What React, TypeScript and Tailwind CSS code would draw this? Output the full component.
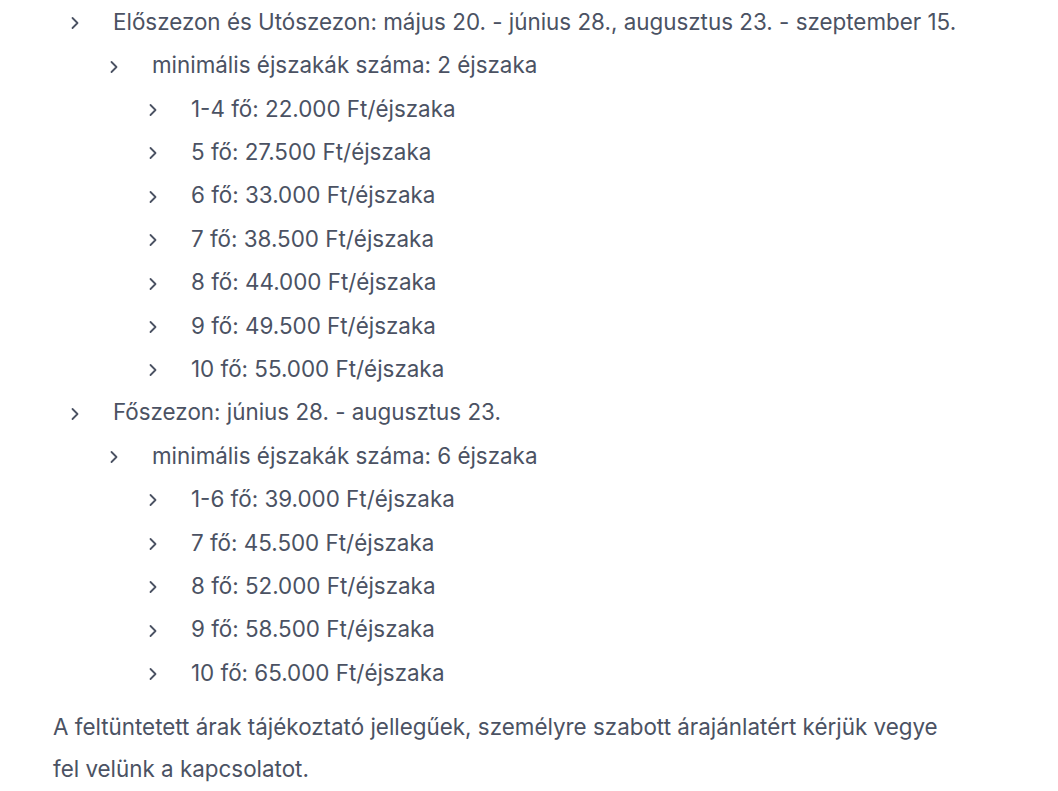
type Item = { text: string; children?: Item[] };

const seasons: Item[] = [
  {
    text: 'Előszezon és Utószezon: május 20. - június 28., augusztus 23. - szeptember 15.',
    children: [
      {
        text: 'minimális éjszakák száma: 2 éjszaka',
        children: [
          { text: '1-4 fő: 22.000 Ft/éjszaka' },
          { text: '5 fő: 27.500 Ft/éjszaka' },
          { text: '6 fő: 33.000 Ft/éjszaka' },
          { text: '7 fő: 38.500 Ft/éjszaka' },
          { text: '8 fő: 44.000 Ft/éjszaka' },
          { text: '9 fő: 49.500 Ft/éjszaka' },
          { text: '10 fő: 55.000 Ft/éjszaka' },
        ],
      },
    ],
  },
  {
    text: 'Főszezon: június 28. - augusztus 23.',
    children: [
      {
        text: 'minimális éjszakák száma: 6 éjszaka',
        children: [
          { text: '1-6 fő: 39.000 Ft/éjszaka' },
          { text: '7 fő: 45.500 Ft/éjszaka' },
          { text: '8 fő: 52.000 Ft/éjszaka' },
          { text: '9 fő: 58.500 Ft/éjszaka' },
          { text: '10 fő: 65.000 Ft/éjszaka' },
        ],
      },
    ],
  },
];

function Chevron() {
  return (
    <svg width="10" height="14" viewBox="0 0 10 14" fill="none" stroke="currentColor" strokeWidth="1.8" className="shrink-0 mr-[33px] mt-[3px]" aria-hidden="true">
      <path d="M2.5 2 L7.5 7 L2.5 12" strokeLinecap="round" strokeLinejoin="round" />
    </svg>
  );
}

function List({ items }: { items: Item[] }) {
  return (
    <ul className="pl-[17px]">
      {items.map((item, i) => (
        <li key={i}>
          <div className="flex items-center h-[43.4px]">
            <Chevron />
            <span>{item.text}</span>
          </div>
          {item.children && <div className="pl-[22px]"><List items={item.children} /></div>}
        </li>
      ))}
    </ul>
  );
}

export default function App() {
  return (
    <div className="bg-white min-h-screen pl-[53px] text-[#4b5263] text-[22.4px]" style={{ fontFamily: 'Inter, sans-serif' }}>
      <List items={seasons} />
      <p className="mt-[12px] leading-[42px] max-w-[912px]">
        A feltüntetett árak tájékoztató jellegűek, személyre szabott árajánlatért kérjük vegye fel velünk a kapcsolatot.
      </p>
    </div>
  );
}
